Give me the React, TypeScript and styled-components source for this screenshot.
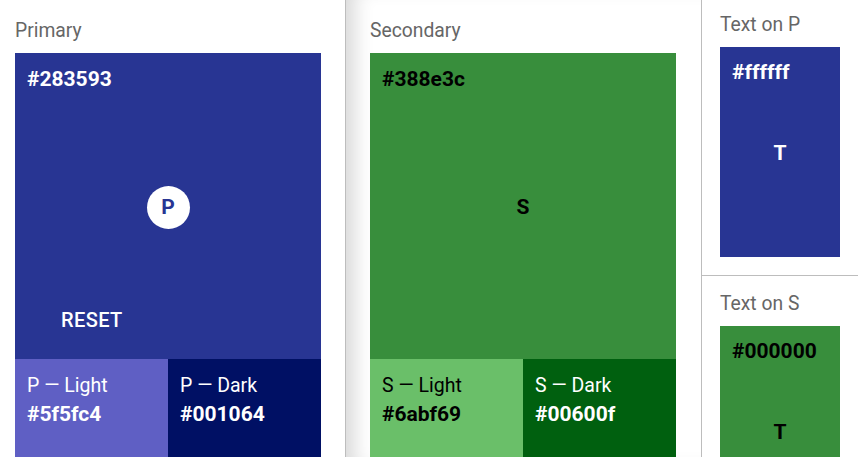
import React from "react";
import styled, { createGlobalStyle } from "styled-components";

const Global = createGlobalStyle`
  html, body { margin: 0; padding: 0; background: #fff; }
  body { font-family: Roboto, "Liberation Sans", Arial, sans-serif; overflow: hidden; }
`;

const Page = styled.div`
  display: flex;
  height: 457px;
  width: 858px;
  overflow: hidden;
`;

const Panel = styled.section<{ $width: number; $padLeft: number; $divider?: boolean }>`
  box-sizing: border-box;
  flex: 0 0 ${(p) => p.$width}px;
  padding: 19px 0 0 ${(p) => p.$padLeft}px;
  border-left: ${(p) => (p.$divider ? "1px solid #bdbdbd" : "none")};
  box-shadow: ${(p) => (p.$divider ? "inset 22px 0 20px -14px rgba(0,0,0,0.16)" : "none")};
  overflow: hidden;
`;

const Title = styled.div`
  font-size: 19.3px;
  line-height: 24px;
  color: #666;
  margin-bottom: 10px;
`;

const Swatch = styled.div`
  width: 306px;
  display: flex;
  flex-direction: column;
`;

const Main = styled.div<{ $bg: string; $fg: string }>`
  box-sizing: border-box;
  height: 306px;
  padding: 14px 12px 12px;
  background: ${(p) => p.$bg};
  color: ${(p) => p.$fg};
  display: grid;
  grid-template: 1fr / 1fr;
`;

const Hex = styled.div`
  font-size: 21px;
  line-height: 24px;
  font-weight: 700;
`;

const Layer = styled.div<{ $align: "start" | "center" | "end"; $justify: "start" | "center" }>`
  grid-area: 1 / 1;
  align-self: ${(p) => p.$align};
  justify-self: ${(p) => p.$justify};
`;

const Circle = styled.div`
  width: 43px;
  height: 43px;
  border-radius: 50%;
  background: #fff;
  color: #283593;
  display: flex;
  align-items: center;
  justify-content: center;
  font-size: 21px;
  font-weight: 700;
`;

const Letter = styled.div<{ $fg: string }>`
  font-size: 21px;
  font-weight: 700;
  line-height: 24px;
  color: ${(p) => p.$fg};
`;

const ResetButton = styled.button`
  font-family: inherit;
  font-size: 20px;
  font-weight: 500;
  letter-spacing: 0.4px;
  line-height: 24px;
  color: #fff;
  background: transparent;
  border: none;
  padding: 8px 16px;
  margin: 0 0 7px 18px;
  cursor: pointer;
`;

const Variants = styled.div`
  display: flex;
`;

const Variant = styled.div<{ $bg: string; $fg: string }>`
  box-sizing: border-box;
  flex: 1 1 0;
  height: 110px;
  padding: 15px 12px;
  background: ${(p) => p.$bg};
  color: ${(p) => p.$fg};
  display: flex;
  flex-direction: column;
  gap: 4px;
`;

const VariantName = styled.div`
  font-size: 19.5px;
  line-height: 24px;
`;

const TextColumn = styled.div`
  display: flex;
  flex-direction: column;
  border-left: 1px solid #bdbdbd;
  flex: 1 1 auto;
`;

const TextSection = styled.div<{ $padTop: number; $divider?: boolean }>`
  padding: ${(p) => p.$padTop}px 0 18px 18px;
  border-top: ${(p) => (p.$divider ? "1px solid #bdbdbd" : "none")};
`;

const TextBox = styled.div<{ $bg: string; $fg: string }>`
  box-sizing: border-box;
  width: 120px;
  height: 210px;
  padding: 13px 12px 12px;
  background: ${(p) => p.$bg};
  color: ${(p) => p.$fg};
  display: grid;
  grid-template: 1fr / 1fr;
`;

export default function App() {
  return (
    <>
      <Global />
      <Page>
        <Panel $width={345} $padLeft={15}>
          <Title>Primary</Title>
          <Swatch>
            <Main $bg="#283593" $fg="#fff">
              <Layer $align="start" $justify="start">
                <Hex>#283593</Hex>
              </Layer>
              <Layer $align="center" $justify="center">
                <Circle>P</Circle>
              </Layer>
              <Layer $align="end" $justify="start">
                <ResetButton>RESET</ResetButton>
              </Layer>
            </Main>
            <Variants>
              <Variant $bg="#5f5fc4" $fg="#fff">
                <VariantName>P — Light</VariantName>
                <Hex>#5f5fc4</Hex>
              </Variant>
              <Variant $bg="#001064" $fg="#fff">
                <VariantName>P — Dark</VariantName>
                <Hex>#001064</Hex>
              </Variant>
            </Variants>
          </Swatch>
        </Panel>
        <Panel $width={356} $padLeft={24} $divider>
          <Title>Secondary</Title>
          <Swatch>
            <Main $bg="#388e3c" $fg="#000">
              <Layer $align="start" $justify="start">
                <Hex>#388e3c</Hex>
              </Layer>
              <Layer $align="center" $justify="center">
                <Letter $fg="#000">S</Letter>
              </Layer>
            </Main>
            <Variants>
              <Variant $bg="#6abf69" $fg="#000">
                <VariantName>S — Light</VariantName>
                <Hex>#6abf69</Hex>
              </Variant>
              <Variant $bg="#00600f" $fg="#fff">
                <VariantName>S — Dark</VariantName>
                <Hex>#00600f</Hex>
              </Variant>
            </Variants>
          </Swatch>
        </Panel>
        <TextColumn>
          <TextSection $padTop={13}>
            <Title>Text on P</Title>
            <TextBox $bg="#283593" $fg="#fff">
              <Layer $align="start" $justify="start">
                <Hex>#ffffff</Hex>
              </Layer>
              <Layer $align="center" $justify="center">
                <Letter $fg="#fff">T</Letter>
              </Layer>
            </TextBox>
          </TextSection>
          <TextSection $padTop={16} $divider>
            <Title>Text on S</Title>
            <TextBox $bg="#388e3c" $fg="#000">
              <Layer $align="start" $justify="start">
                <Hex>#000000</Hex>
              </Layer>
              <Layer $align="center" $justify="center">
                <Letter $fg="#000">T</Letter>
              </Layer>
            </TextBox>
          </TextSection>
        </TextColumn>
      </Page>
    </>
  );
}
